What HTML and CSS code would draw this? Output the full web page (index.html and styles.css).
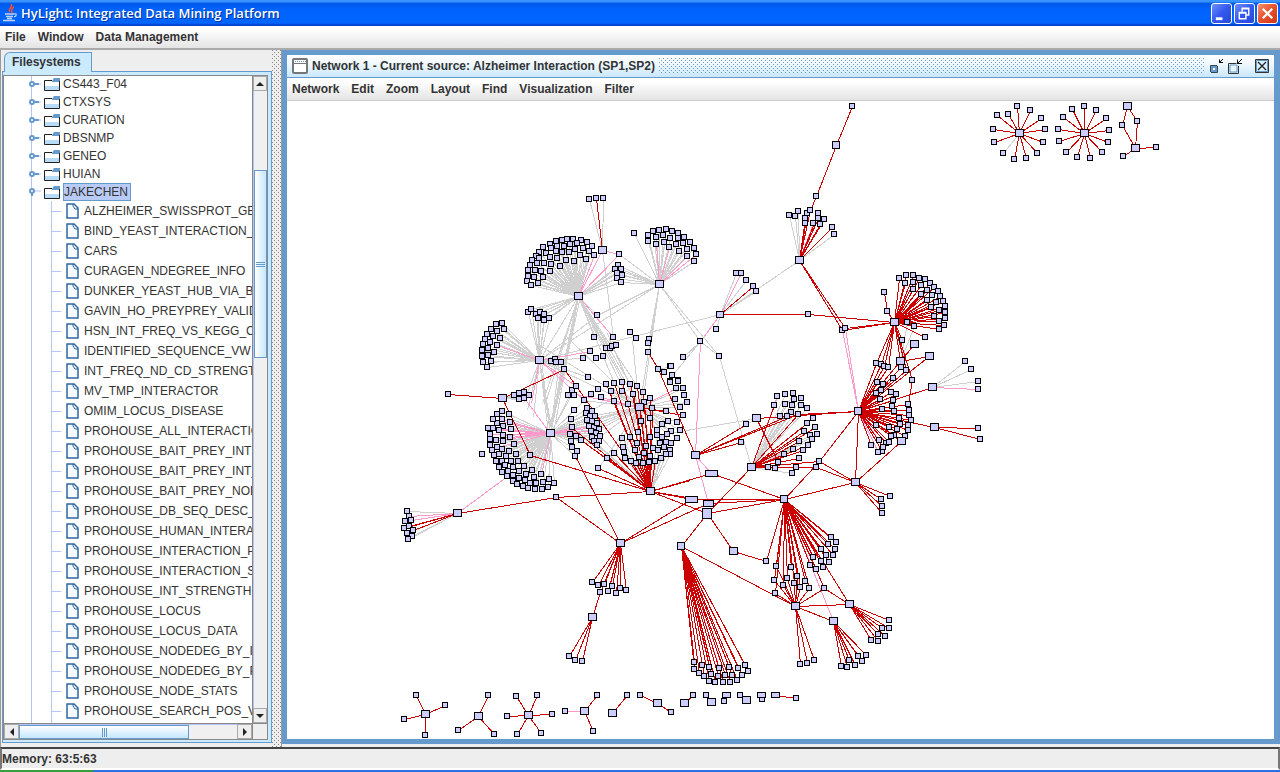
FILE: index.html
```html
<!DOCTYPE html>
<html lang="en">
<head>
<meta charset="utf-8">
<title>HyLight: Integrated Data Mining Platform</title>
<link rel="stylesheet" href="styles.css">
</head>
<body>
<svg class="defs" aria-hidden="true">
  <symbol id="folder" viewBox="0 0 16 13">
    <path d="M1 3h14v9H1z" fill="#fff"/>
    <path d="M1 8h14v4H1z" fill="#b8dcf8"/>
    <path d="M.5 12.500V2.500H8M.5 12.500h15V3" fill="none" stroke="#222"/>
    <path d="M8 3l2-3h6v3z" fill="#6699cc"/>
    <path d="M8 3.500h7" stroke="#6699cc"/>
  </symbol>
  <symbol id="file" viewBox="0 0 13 16">
    <path d="M1 1h7l4 4v10H1z" fill="#f4faff" stroke="#3266a0" stroke-width="1.500"/>
    <path d="M7 1v2l2 3h3" fill="none" stroke="#3266a0"/>
    <path d="M8 2l3 3" stroke="#8fb8e0"/>
  </symbol>
  <symbol id="knob" viewBox="0 0 12 8">
    <path d="M4 4h6" stroke="#6699cc" stroke-width="2"/>
    <path d="M10 4h2" stroke="#b4c4f4"/>
    <circle cx="3" cy="4" r="2" fill="#fff" stroke="#6699cc" stroke-width="2"/>
  </symbol>
  <symbol id="knob-open" viewBox="0 0 12 8">
    <path d="M5 3h7" stroke="#b4c4f4"/>
    <path d="M3 4v4" stroke="#6699cc" stroke-width="2"/>
    <circle cx="3" cy="3" r="2" fill="#fff" stroke="#6699cc" stroke-width="2"/>
  </symbol>
</svg>

<header class="titlebar">
  <svg class="java" viewBox="0 0 16 18" aria-hidden="true">
    <path d="M9 0c3 3-4 4-1 8M12 3c-4 2-2 4-2 6" fill="none" stroke="#f05038" stroke-width="1.500"/>
    <path d="M3 10h9M4 12.500h7M5 14.500h5M1 16.500h12M12 10c3-1 3 2 0 3" fill="none" stroke="#c4d4f4" stroke-width="1.300"/>
  </svg>
  <h1>HyLight: Integrated Data Mining Platform</h1>
  <div class="winbtns">
    <button aria-label="Minimize"><svg viewBox="0 0 20 20"><path d="M4 14h7v3H4z" fill="#fff"/></svg></button>
    <button aria-label="Restore"><svg viewBox="0 0 20 20"><path d="M4.500 9.500h7v6h-7zM4 9h8M7.500 8V4.500h7v7H12M7 5h8" fill="none" stroke="#fff" stroke-width="1.500"/></svg></button>
    <button class="close" aria-label="Close"><svg viewBox="0 0 20 20"><path d="M5 5l10 10M15 5L5 15" stroke="#fff" stroke-width="2.400"/></svg></button>
  </div>
</header>

<nav class="menubar">
  <button>File</button><button>Window</button><button>Data Management</button>
</nav>

<main class="workspace">
  <aside class="side">
    <div class="tabs"><button class="tab">Filesystems</button></div>
    <div class="pane">
      <div class="scroller">
        <div class="tree" id="tree"></div>
        <div class="vbar">
          <button class="arrow" aria-label="Scroll up"><svg viewBox="0 0 8 4"><path d="M0 4h8L4 0z"/></svg></button>
          <div class="vtrack"><div class="vthumb"></div></div>
          <button class="arrow" aria-label="Scroll down"><svg viewBox="0 0 8 4"><path d="M0 0h8L4 4z"/></svg></button>
        </div>
        <div class="hbar">
          <button class="arrow" aria-label="Scroll left"><svg viewBox="0 0 4 8"><path d="M4 0v8L0 4z"/></svg></button>
          <div class="htrack"><div class="hthumb"></div></div>
          <button class="arrow" aria-label="Scroll right"><svg viewBox="0 0 4 8"><path d="M0 0v8l4-4z"/></svg></button>
        </div>
        <div class="corner"></div>
      </div>
    </div>
  </aside>
  <div class="splitter"></div>
  <section class="frame">
    <div class="framebar">
      <svg class="frameicon" viewBox="0 0 16 16" aria-hidden="true"><rect x="1" y="1" width="14" height="14" rx="1" fill="#fff" stroke="#777" stroke-width="2"/><path d="M2 5.500h12" stroke="#777"/><path d="M3 3.500h11" stroke="#6699cc" stroke-dasharray="1 1"/></svg>
      <h2>Network 1 - Current source: Alzheimer Interaction (SP1,SP2)</h2>
      <div class="grip"></div>
      <div class="framebtns">
        <button aria-label="Iconify"><svg viewBox="0 0 16 16"><path d="M4 9h4v4H4z" fill="#fff" stroke="#6699cc" stroke-width="2"/><path d="M2.500 14V7.500H9M3 14.500h6.500V8" fill="none" stroke="#345"/><path d="M15 1l-4 4M11.500 1.500v3H15" fill="none" stroke="#111"/></svg></button>
        <button aria-label="Maximize"><svg viewBox="0 0 16 16"><path d="M3 7h7v7H3z" fill="#e8f6ff" stroke="#6699cc"/><path d="M1.500 15.500v-10h8M11.500 8v7.500h-10" fill="none" stroke="#333"/><path d="M15 1l-5 5M10.500 1.500v4H15" fill="none" stroke="#111"/></svg></button>
        <button aria-label="Close network"><svg viewBox="0 0 16 16"><path d="M1.500 1.500h13v13h-13z" fill="#d9f0ff" stroke="#333"/><path d="M2.500 2.500h11v11h-11z" fill="none" stroke="#6699cc"/><path d="M4 4l8 8M12 4l-8 8" stroke="#222" stroke-width="1.300"/></svg></button>
      </div>
    </div>
    <nav class="menubar inner">
      <button>Network</button><button>Edit</button><button>Zoom</button><button>Layout</button><button>Find</button><button>Visualization</button><button>Filter</button>
    </nav>
    <svg class="network" id="network" role="img" aria-label="Protein interaction network"></svg>
  </section>
</main>
<footer class="status">Memory: 63:5:63</footer>
<div class="taskbar"><div class="start"></div></div>
<script src="app.js"></script>
</body>
</html>
```
FILE: styles.css
```css
* { box-sizing: border-box; }
body {
  margin: 0;
  height: 100vh;
  display: flex;
  flex-direction: column;
  overflow: hidden;
  background: #eee;
  color: #333;
  font: 12px/16px "Liberation Sans", Arial, sans-serif;
}
button { margin: 0; padding: 0; border: 0; background: none; color: inherit; font: inherit; }
h1, h2 { margin: 0; white-space: nowrap; }
.defs { display: none; }

.titlebar {
  flex: none;
  height: 26px;
  display: flex;
  align-items: center;
  gap: 3px;
  padding: 0 2px;
  background: linear-gradient(#3a94ff 0, #3a94ff 2px, #0058e8 3px, #0062fc 9px, #0066ff 23px, #0034c0 26px);
}
.java { width: 16px; height: 18px; }
.titlebar h1 {
  flex: 1;
  color: #fff;
  font: 600 13px/20px "Open Sans", "Noto Sans", sans-serif;
  text-shadow: 1px 1px 0 #00309c;
}
.winbtns { display: flex; gap: 2px; }
.winbtns button {
  width: 21px;
  height: 21px;
  border: 1px solid #fff;
  border-radius: 3px;
  background: linear-gradient(135deg, #6f8ffb, #3358ee 50%, #2848d8);
}
.winbtns .close { background: linear-gradient(135deg, #f89070, #e8502c 50%, #cc3818); }
.winbtns svg { display: block; width: 100%; height: 100%; }

.menubar {
  flex: none;
  height: 24px;
  display: flex;
  align-items: center;
  gap: 12px;
  padding: 0 5px;
  background: linear-gradient(#fff 15%, #e4e4e4);
  border-bottom: 2px solid #aaa;
  font-weight: bold;
}
.menubar.inner { height: 23px; border-bottom: 1px solid #ccc; }

.workspace { flex: 1; min-height: 0; display: flex; }
.side { flex: none; width: 272px; display: flex; flex-direction: column; padding: 2px 0 4px 1px; border-left: 1px solid #999; }
.tabs { height: 19px; display: flex; padding-left: 2px; }
.tab {
  width: 88px;
  height: 20px;
  position: relative;
  z-index: 1;
  padding: 0 0 2px 7px;
  border: 1px solid #6699cc;
  border-bottom: 0;
  border-radius: 6px 0 0 0;
  background: #cbeafe;
  font-weight: bold;
  text-align: left;
}
.pane { flex: 1; min-height: 0; padding: 3px 3px 2px 0; border: 1px solid #6699cc; background: #cbeafe; }
.scroller {
  height: 100%;
  display: grid;
  grid-template: minmax(0, 1fr) 16px / minmax(0, 1fr) 15px;
  border: 1px solid #888;
  background: #fff;
}
.tree { overflow: hidden; background: #fff; }
.tree ul { list-style: none; margin: 0; padding: 0; }
.tree .folders { margin-top: -1px; }
.tree li { white-space: nowrap; }
.row { display: flex; align-items: center; }
.row svg { flex: none; }
.folders { background: linear-gradient(#b4c4f4, #b4c4f4) 27px 0 / 1px 100% no-repeat; }
.folders .row { height: 18px; padding-left: 25px; }
.folders .knob { width: 12px; height: 8px; margin-right: 3px; }
.folders .icon { width: 16px; height: 13px; margin-right: 3px; }
.row span { border: 1px solid transparent; border-left-width: 0; line-height: 16px; }
.row .selected { border: 1px solid #6699cc; background: #b8caf6; padding-right: 2px; }
.files { background: linear-gradient(#b4c4f4, #b4c4f4) 47px 0 / 1px 100% no-repeat; }
.files .row { height: 20px; padding-left: 48px; }
.files .row::before { content: ""; flex: none; width: 9px; height: 1px; margin-right: 5px; background: #b4c4f4; }
.files .icon { width: 13px; height: 16px; margin-right: 5px; }

.arrow { width: 14px; height: 15px; display: grid; place-items: center; background: #eee; border: 1px solid #aaa; }
.arrow svg { width: 8px; height: 8px; fill: #222; }
.vbar { display: flex; flex-direction: column; border-left: 1px solid #888; background: #f0f0f0; }
.vtrack { flex: 1; padding-top: 79px; border-left: 1px solid #b4c4f4; }
.vthumb {
  height: 188px;
  border: 1px solid #6699cc;
  display: grid;
  place-items: center;
  background: linear-gradient(90deg, #fff, #c4e6fc);
}
.vthumb::after { content: ""; width: 9px; height: 5px; background: repeating-linear-gradient(#6699cc 0 1px, transparent 1px 2px); }
.hbar { display: flex; border-top: 1px solid #888; background: #f0f0f0; }
.hbar .arrow { width: 15px; height: 15px; }
.htrack { flex: 1; border-top: 1px solid #b4c4f4; }
.hthumb {
  width: 170px;
  height: 14px;
  border: 1px solid #6699cc;
  display: grid;
  place-items: center;
  background: linear-gradient(#fff, #c4e6fc);
}
.hthumb::after { content: ""; width: 5px; height: 9px; background: repeating-linear-gradient(90deg, #6699cc 0 1px, transparent 1px 2px); }
.corner { background: #eee; border-top: 1px solid #888; border-left: 1px solid #888; }

.splitter {
  flex: none;
  width: 10px;
  border-right: 1px solid #999;
  background:
    conic-gradient(from 270deg at 1px 1px, #888 90deg, transparent 0) 4px 0 / 4px 4px,
    conic-gradient(from 270deg at 1px 1px, #888 90deg, transparent 0) 6px 2px / 4px 4px,
    #eee;
}
.frame { flex: 1; min-width: 0; display: flex; flex-direction: column; margin-bottom: 3px; border: 5px solid #6699cc; border-right-width: 6px; background: #fff; }
.framebar {
  flex: none;
  height: 23px;
  display: flex;
  align-items: center;
  gap: 4px;
  padding: 0 4px 0 5px;
  background: linear-gradient(#fff, #f0f8fe 40%, #c8e8fc);
  border-bottom: 1px solid #6699cc;
}
.frameicon { width: 16px; height: 16px; }
.framebar h2 { font-size: 12px; line-height: 16px; }
.grip {
  flex: 1;
  height: 16px;
  background:
    conic-gradient(from 270deg at 1px 1px, #6699cc 90deg, transparent 0) 0 0 / 4px 4px,
    conic-gradient(from 270deg at 1px 1px, #6699cc 90deg, transparent 0) 2px 2px / 4px 4px;
}
.framebtns { display: flex; gap: 3px; }
.framebtns button:last-child { margin-left: 8px; }
.framebtns svg { display: block; width: 16px; height: 16px; }
.network { flex: 1; min-height: 0; width: 100%; background: #fff; }
.edge { fill: none; stroke-width: 1; shape-rendering: crispEdges; }
.edge.g { stroke: #d0d0d0; }
.edge.p { stroke: #ff99cc; }
.edge.r { stroke: #cc0000; }
.node { fill: #ccccff; stroke: #000; stroke-width: 1; shape-rendering: crispEdges; }

.status {
  flex: none;
  height: 23px;
  padding: 2px 0;
  border: 2px solid #777;
  border-top-color: #444;
  border-bottom-color: #fff;
  background: #eee;
  font-weight: bold;
  line-height: 16px;
}
.taskbar { flex: none; height: 2px; background: #2f6fe0; }
.start { width: 93px; height: 2px; background: #3a9c3a; }
```
FILE: app.js
```js
const folders = ["CS443_F04", "CTXSYS", "CURATION", "DBSNMP", "GENEO", "HUIAN", "JAKECHEN"];
const files = ["ALZHEIMER_SWISSPROT_GENE", "BIND_YEAST_INTERACTION_", "CARS", "CURAGEN_NDEGREE_INFO",
  "DUNKER_YEAST_HUB_VIA_BIND", "GAVIN_HO_PREYPREY_VALID", "HSN_INT_FREQ_VS_KEGG_C", "IDENTIFIED_SEQUENCE_VW",
  "INT_FREQ_ND_CD_STRENGTH", "MV_TMP_INTERACTOR", "OMIM_LOCUS_DISEASE", "PROHOUSE_ALL_INTERACTION",
  "PROHOUSE_BAIT_PREY_INTER", "PROHOUSE_BAIT_PREY_INT_", "PROHOUSE_BAIT_PREY_NODE", "PROHOUSE_DB_SEQ_DESC_",
  "PROHOUSE_HUMAN_INTERACT", "PROHOUSE_INTERACTION_P", "PROHOUSE_INTERACTION_S", "PROHOUSE_INT_STRENGTH",
  "PROHOUSE_LOCUS", "PROHOUSE_LOCUS_DATA", "PROHOUSE_NODEDEG_BY_I", "PROHOUSE_NODEDEG_BY_P",
  "PROHOUSE_NODE_STATS", "PROHOUSE_SEARCH_POS_V", ""];
const use = (cls, id) => `<svg class="${cls}" aria-hidden="true"><use href="#${id}"/></svg>`;
document.getElementById("tree").innerHTML =
  `<ul class="folders">` + folders.map(name => {
    const open = name === "JAKECHEN";
    const kids = open ? `<ul class="files">` + files.map(f => `<li class="row">${use("icon", "file")}<span>${f}</span></li>`).join("") + "</ul>" : "";
    return `<li><div class="row">${use("knob", open ? "knob-open" : "knob")}${use("icon", "folder")}<span class="${open ? "selected" : ""}">${name}</span></div>${kids}</li>`;
  }).join("") + "</ul>";

// Each region stores its points in thirds of a pixel from its own origin.
const edges = [], hubs = [], leaves = [];
const LEFT = 287, TOP = 101;
function region(ox, oy) {
  const at = s => s.trim().split(/\s+/).map(p => {
    const [x, y] = p.split(",").map(Number);
    return [Math.round(ox + x / 3) - LEFT, Math.round(oy + y / 3) - TOP];
  });
  const api = {
    link(from, colour, to) { const [a] = at(from); at(to).forEach(b => edges.push([colour, a, b])); return api; },
    leaf(pts) { leaves.push(...at(pts)); return api; },
    fan(from, colour, to) { api.link(from, colour, to); return api.leaf(to); },
    hub(pts, w = 8, h = 7) { at(pts).forEach(p => hubs.push([p, w, h])); return api; }
  };
  return api;
}

const nw = region(470, 190);
const midCluster = "444,225 434,237 453,237 441,249 456,255 441,264 453,275";
const lowCluster = "174,366 183,357 198,373 210,366 222,373 205,385 221,390 237,384";
nw.fan("325,318", "g", `220,172 241,162 258,153 276,150 291,147 308,147 333,150 351,156 366,168 357,183 339,173 321,160
  301,163 281,168 261,169 243,175 228,188 207,186 198,198 186,211 180,225 174,241 174,257 171,273 184,285 204,279 219,261
  193,261 195,241 214,242 222,220 201,220 208,204 240,201 258,183 276,187 297,186 315,178 330,195 348,207 312,213 288,210
  260,204 243,222 270,228 240,244`)
  .fan("325,318", "p", "372,195 447,192 429,441").link("325,318", "p", "397,180")
  .fan("325,318", "g", midCluster + " " + lowCluster + " 381,375 372,441")
  .link("567,282", "g", midCluster + " 447,192 207,510")
  .link("207,510", "g", lowCluster + " 325,318 354,561 381,375 750,372")
  .link("325,318", "g", "241,729 250,729 235,729 215,640 225,640 258,680 420,473 408,475 480,582 501,588 458,576 433,579 507,651 480,640")
  .fan("567,282", "g", `492,129 534,135 534,153 549,123 558,141 568,120 587,118 579,135 582,156 606,124 600,144 618,162
    624,129 624,144 642,141 640,159 627,183 651,177 660,156 672,174 672,213`)
  .fan("567,282", "p", "558,162 597,171 651,198 677,193")
  .link("567,282", "g", "691,453 747,498 537,447 534,459 534,486 381,375 507,651 517,640")
  .link("691,453", "g", "639,502 606,555")
  .fan("397,180", "g", "357,27 399,24").fan("397,180", "r", "378,24").link("397,180", "p", "447,192").link("397,180", "g", "429,441")
  .fan("207,510", "g", `78,403 96,399 102,417 63,417 81,423 52,432 69,438 90,444 45,447 60,456 39,463 54,474 36,480 72,487
    36,497 54,495 63,513 39,516 51,531 243,512 255,507 258,516 273,516 339,504`)
  .fan("207,510", "p", "81,465 361,483").link("207,510", "p", "318,589 342,630 183,640")
  .link("207,510", "g", "241,729 235,729 245,729 160,640 172,660 190,680 480,640")
  .leaf("378,504 400,498 408,475 420,473 426,468 438,465 480,426 498,444 537,447 534,459 534,486 354,561")
  .fan("564,537", "r", "534,486").fan("564,537", "g", "582,546").leaf("564,537")
  .leaf("601,528 606,555 639,502 601,574 624,571 618,594 639,594").hub("325,318 567,282 397,180 207,510");

const mid = region(430, 350);
mid.link("361,249", "g", `445,-162 440,-162 450,-162 327,30 334,30 388,30 396,30
    438,258 453,271 423,273 441,304 435,318 462,150 438,109 426,120 282,144 607,110`)
  .fan("361,249", "g", `217,183 201,192 237,192 240,215 201,219 220,227 174,234 243,237 180,285 219,273 252,282 186,300
    216,297 237,303 258,312 193,315 208,312 228,318 198,333 216,333 243,333 264,333 207,351 225,345 249,351 282,347
    216,366 234,363 267,363 306,360 231,378 249,375 288,372 248,394 267,384 285,390 312,381 261,402 280,408
    300,399 319,400 339,397 357,387 372,400 354,411 295,415 316,417 335,417`)
  .fan("361,249", "p", "217,206 189,233 208,239 180,253 219,255 198,270 240,261 180,268 201,291 333,372 189,207 420,252 426,231 478,228 492,231 483,243 282,144")
  .fan("361,249", "g", "423,207 472,174 469,189 486,184 480,198 495,199 471,210 486,213 501,219 507,237 498,250 510,258 487,260 492,272 507,272 501,285")
  .leaf("156,312 433,180 438,258 453,271 423,273 426,291 441,304 435,318 414,136 433,136 426,120 438,109 462,150 483,132 504,116 513,141 474,81 402,57")
  .fan("216,144", "r", "54,132").link("216,144", "r", "402,57").fan("216,144", "r", "300,315")
  .fan("216,144", "g", "253,136 267,129 282,127 297,135 282,144 267,147")
  .link("402,57", "r", "438,109").link("438,109", "r", "660,422")
  .link("82,489", "r", "379,442").link("82,489", "p", "231,378")
  .link("660,422", "r", "379,442 300,315 504,354 552,310 531,324 438,258 453,271 423,231 780,390 771,440")
  .link("660,422", "r", "528,103 553,99 577,96 600,102 621,108 638,126 609,132 552,154 642,156 660,144 666,174 633,213 627,171 619,339 638,339 656,337 675,332 602,333")
  .link("627,171", "r", "660,204 708,183 759,195").link("627,171", "p", "420,130 513,141 738,114 660,204")
  .link("627,171", "g", `528,103 543,123 576,123 594,162 501,219 486,213 507,237 510,258 438,258 462,150 531,-52 537,-33 607,-30
    738,114 735,147 771,156 750,172 759,115 715,213 741,216 696,222 750,239 723,243 681,240 711,253 697,261 740,265 720,300
    600,261 624,246 576,264 621,279 615,300 648,288 669,294 583,307 580,291 552,310 471,210 480,198 478,228 504,354
    411,-39 318,-20 361,249`)
  .link("681,255", "g", "978,204")
  .link("660,422", "g", "681,255 711,253 723,280 708,276 690,279 703,291 720,313 708,313 693,324 685,301 660,318 642,310 627,321 600,261 624,246 576,264 580,291 583,307 585,324 510,258 501,285 492,272")
  .leaf(`528,103 553,99 577,96 600,102 621,108 638,126 543,123 576,123 609,132 552,154 594,162 642,156 660,144 666,174
    660,204 633,213 708,183 759,195 715,213 741,216 696,222 750,239 723,243 681,240 711,253 697,261 681,255 740,265
    723,280 708,276 690,279 720,300 703,291 720,313 708,313 693,324 675,332 656,337 638,339 619,339 602,333 585,324
    583,307 580,291 600,261 624,246 576,264 621,279 615,300 648,288 669,294 660,261 642,310 627,321 660,318 685,301
    552,310 531,324 504,354 684,57 702,66 722,48 726,75 721,95 744,92 738,114 759,115 762,135 735,147 771,156 750,172
    759,22 653,6 379,442`)
  .link("570,579", "r", "379,442 435,318").link("684,57", "r", "653,6 794,315")
  .link("684,57", "g", "722,48").link("759,22", "g", "811,-27")
  .hub("361,249 627,171 660,422 216,144 82,489 570,579");

region(396, 500).fan("184,39", "g", "33,33 27,63 33,100 48,108 37,117").fan("184,39", "p", "39,47 45,60").fan("184,39", "r", "23,84 39,78 51,90");

const centre = region(660, 340);
centre.fan("273,381", "g", `342,195 351,168 375,163 399,159 402,176 422,174 375,192 396,194 422,195 441,205 393,216 360,228
    381,227 470,282 450,284 456,297 399,327 345,384 397,399`)
  .fan("273,381", "r", "414,222 441,249 458,234 465,261 432,274 417,303 444,315 429,330 373,342 417,354 354,367 324,381 408,381 469,380")
  .link("273,381", "r", "477,363 342,195").link("273,381", "p", "351,168")
  .fan("104,345", "r", "258,252 242,306").link("104,345", "r", "381,227 414,222 -6,87")
  .link("104,345", "p", "121,3 154,399 145,490").fan("121,3", "g", "177,48").link("177,48", "g", "273,381")
  .link("288,234", "r", "595,214 354,367").link("288,234", "g", "258,252")
  .link("595,214", "r", "414,222 585,426 477,363").link("477,363", "r", "585,426 373,477").leaf("477,363 121,3")
  .link("469,380", "r", "585,426").fan("585,426", "r", "690,467 663,477 666,498 666,518").link("585,426", "r", "723,302 373,477")
  .link("373,477", "r", "154,399 94,476 145,490 141,520")
  .link("-30,452", "r", "154,399 94,476 141,520").link("-120,609", "r", "94,476 145,490")
  .link("141,520", "r", "64,618 219,633 273,381")
  .hub("104,345 273,381 288,234 585,426 219,633").hub("595,214 373,477 64,618", 7, 7)
  .hub("154,399 94,476", 12, 6).hub("145,490", 10, 6).hub("141,520", 9, 10);

// Small group beside the top-right cluster.
region(720, 314)
  .fan("0,0", "g", "48,-123 78,-102").fan("0,0", "p", "63,-123").fan("0,0", "r", "99,-84").fan("0,0", "g", "108,-69")
  .link("0,0", "p", "-59,81").link("0,0", "g", "-11,45").leaf("-11,45").hub("0,0", 7, 6);

const ne = region(770, 100);
ne.leaf("247,18 138,288").link("199,135", "r", "247,18 138,288").link("121,330", "r", "138,288")
  .fan("87,480", "g", "57,345 75,348 84,333 192,402").fan("87,480", "p", "129,369")
  .fan("87,480", "r", "105,354 105,370 111,340 121,330 145,339 145,354 163,357 150,372 186,381 216,690 225,684")
  .link("87,480", "g", "-150,642").link("265,934", "p", "216,690 225,684")
  .fan("371,666", "r", `387,534 409,525 428,525 447,534 465,537 480,549 492,561 504,573 510,588 519,603 524,618 525,636
    525,653 522,674 508,687 507,663 507,630 498,606 493,648 483,622 471,600 486,585 471,569 453,582 453,555 430,568
    428,546 405,549 411,666 432,678 351,633 465,711 396,720 319,789 333,792 341,798 354,801 393,801 407,810 427,840 114,642`)
  .link("371,666", "r", "225,684 216,690 390,783").fan("351,633", "r", "342,576").link("114,642", "r", "-150,642")
  .link("390,783", "g", "411,666 432,678").link("390,783", "r", "432,732 407,810 477,768")
  .link("427,840", "r", "414,912")
  .fan("265,934", "r", `319,789 333,792 341,798 354,801 321,846 339,852 369,834 407,810 393,801 318,880 333,870 330,897
    363,877 378,882 369,900 366,918 336,928 372,933 414,912 417,930 417,945 423,960 390,972 414,975 380,987 358,980
    414,991 405,1008 372,1005 363,1008 348,1029 357,1025 303,1035 336,1053 339,1041 318,975`)
  .fan("265,934", "p", "388,954 328,1020 323,1056").link("265,934", "r", "432,732 477,768 487,861 491,981 393,1022")
  .fan("487,861", "g", "586,783 603,808 625,843").fan("487,861", "p", "624,867").fan("491,981", "r", "624,984 630,1017")
  .hub("199,135", 7, 7).hub("87,480 371,666 432,732 390,783 477,768 487,861 491,981 393,1022");

const south = region(550, 480);
south.fan("210,189", "r", "126,306 144,315 162,312 150,336 174,333 186,318 198,339 210,324 228,330")
  .link("150,336", "r", "126,411").fan("126,411", "r", "57,528 75,540 97,544")
  .fan("394,198", "r", `432,546 432,567 447,579 477,561 462,589 483,582 477,603 504,588 496,607 525,585 519,607 537,562
    546,585 539,606 563,564 561,600 585,555 576,586 594,573`)
  .fan("394,198", "p", "456,555 507,564").link("394,198", "r", "735,378")
  .link("549,213", "r", "648,243")
  .fan("703,57", "r", `648,243 677,258 672,300 675,339 699,315 723,261 711,294 741,288 732,310 765,303 750,322 777,324
    843,171 858,186 834,193 812,207 855,207 828,225 849,226 789,231 812,243 837,246 780,256 798,267 819,261 821,324`)
  .link("703,57", "r", "898,372").link("703,57", "p", "849,423 789,231")
  .link("735,378", "r", "672,300 675,339 677,258 699,315 711,294 741,288 732,310 750,322 777,324 821,324 898,372 849,423")
  .link("898,372", "r", "821,324").fan("735,378", "r", "751,553 771,549 792,540")
  .fan("898,372", "r", "1018,420 997,444 1017,444 984,462 1005,468 963,481 984,483")
  .fan("849,423", "r", "873,558 891,561 897,541 916,555 937,543 924,528 948,525")
  .hub("126,411 735,378 849,423").hub("898,372", 8, 7);

region(390, 680)
  .fan("105,102", "r", "78,46 165,75 42,117 106,165").fan("264,108", "r", "295,46 204,150 312,163")
  .fan("415,105", "r", "378,48 442,46 351,108 486,102 382,162 453,159")
  .fan("582,93", "p", "525,93").fan("582,93", "r", "622,46 609,153").fan("666,99", "r", "711,46")
  .fan("801,69", "r", "750,46 843,96").fan("882,69", "r", "910,46").fan("963,66", "r", "949,46")
  .fan("1008,46", "r", "1002,63").fan("1068,60", "r", "1050,46").fan("1112,46", "r", "1116,57").fan("1156,46", "r", "1218,54")
  .hub("105,102 264,108 415,105 582,93 666,99 801,69 882,69 963,66 1068,60").hub("1008,46 1112,46 1156,46", 8, 5);

region(1000, 0)
  .fan("57,399", "r", "-9,345 -21,387 -18,427 25,342 52,318 90,330 123,354 135,387 129,426 112,459 78,475 42,477")
  .fan("57,399", "g", "8,459")
  .fan("252,399", "r", "189,352 216,328 252,318 288,330 318,354 327,390 324,426 305,456 270,474 231,471 198,456 177,423 174,387")
  .fan("381,318", "r", "411,363 366,376").fan("405,444", "r", "411,363 366,376 468,442 369,468")
  .hub("57,399 252,399 381,318 405,444");

const rect = ([x, y], w, h) => `<rect class="node" x="${x - Math.ceil(w / 2)}" y="${y - Math.ceil(h / 2)}" width="${w}" height="${h}"/>`;
const order = { g: 0, p: 1, r: 2 };
edges.sort((a, b) => order[a[0]] - order[b[0]]);
document.getElementById("network").innerHTML = `<g transform="translate(.5 .5)">` +
  edges.map(([c, a, b]) => `<path class="edge ${c}" d="M${a}L${b}"/>`).join("") +
  leaves.map(p => rect(p, 5, 5)).join("") +
  hubs.map(([p, w, h]) => rect(p, w, h)).join("") + "</g>";
```
